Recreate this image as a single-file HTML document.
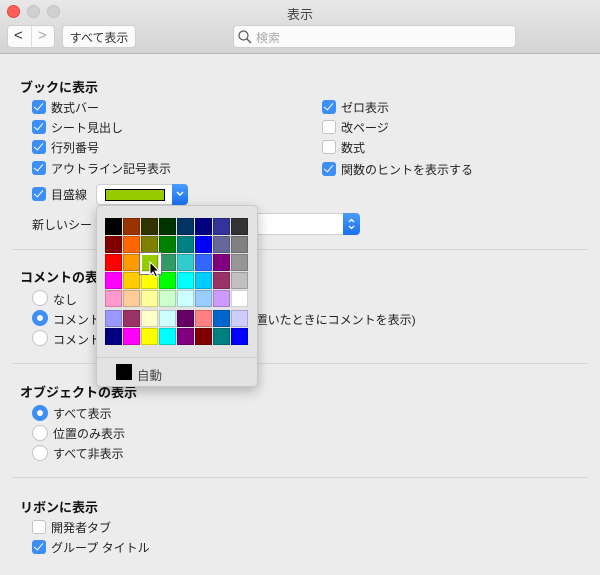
<!DOCTYPE html><html><head><meta charset="utf-8"><style>
*{margin:0;padding:0;box-sizing:border-box}
body{width:600px;height:575px;background:#ececec;font-family:"Liberation Sans","Noto Sans CJK JP",sans-serif;font-size:12px;color:#222;position:relative;overflow:hidden}
.a{position:absolute}
.tb{left:0;top:0;width:600px;height:54px;background:linear-gradient(#e8e8e8,#d3d3d3);border-bottom:1px solid #b8b8b8}
.dot{width:13px;height:13px;border-radius:50%;top:5px;background:#d0d0d0;border:1px solid #c2c2c2}
.btn{background:#fbfbfb;border:1px solid #cfcfcf;border-radius:4px;height:23px;top:25px}
.h{font-weight:bold;font-size:13px;left:20px;color:#111}
.cb{width:14px;height:14px;border-radius:3px;background:#3d8ef7;left:32px}
.cb::after{content:"";position:absolute;left:4px;top:1px;width:4px;height:8px;border:solid #fff;border-width:0 1.6px 1.6px 0;transform:rotate(40deg)}
.cb.off{background:#fff;border:1px solid #c3c3c3}
.cb.off::after{display:none}
.lb{left:51px}
.rd{width:16px;height:16px;border-radius:50%;background:#fff;border:1px solid #c3c3c3;left:32px}
.rd.on{background:#3d8ef7;border-color:#3d8ef7}
.rd.on::after{content:"";position:absolute;left:4px;top:4px;width:6px;height:6px;border-radius:50%;background:#fff}
.sep{left:12px;width:576px;height:1px;background:#d6d6d6}
.sw{width:17px;height:17px;border:1px solid rgba(0,0,0,.18)}
</style></head><body>
<div class="a tb"></div>
<div class="a dot" style="left:7px;background:#fc5f57;border-color:#e2463f"></div>
<div class="a dot" style="left:27px"></div>
<div class="a dot" style="left:47px"></div>
<div class="a" style="left:0;top:4px;width:600px;text-align:center;font-size:13px;color:#444">表示</div>
<div class="a btn" style="left:7px;width:48px"></div>
<div class="a" style="left:31px;top:26px;width:1px;height:21px;background:#ddd"></div>
<div class="a" style="left:14px;top:27px;font-size:15px;color:#333">&lt;</div>
<div class="a" style="left:38px;top:27px;font-size:15px;color:#aaa">&gt;</div>
<div class="a btn" style="left:62px;width:74px"></div>
<div class="a" style="left:62px;top:29px;width:74px;text-align:center;color:#333">すべて表示</div>
<div class="a btn" style="left:233px;width:283px"></div>
<svg class="a" style="left:237px;top:29px" width="16" height="16"><circle cx="6.5" cy="6.5" r="4.5" fill="none" stroke="#555" stroke-width="1.2"/><line x1="10" y1="10" x2="14" y2="14" stroke="#555" stroke-width="1.3"/></svg>
<div class="a" style="left:256px;top:29px;color:#aaa">検索</div>

<div class="a h" style="top:77px">ブックに表示</div>
<div class="a cb" style="top:100px"></div><div class="a lb" style="top:99px">数式バー</div>
<div class="a cb" style="top:120px"></div><div class="a lb" style="top:119px">シート見出し</div>
<div class="a cb" style="top:140px"></div><div class="a lb" style="top:139px">行列番号</div>
<div class="a cb" style="top:161px"></div><div class="a lb" style="top:160px">アウトライン記号表示</div>
<div class="a cb" style="top:187px"></div><div class="a lb" style="top:186px">目盛線</div>
<div class="a cb" style="left:322px;top:100px"></div><div class="a" style="left:341px;top:99px">ゼロ表示</div>
<div class="a cb off" style="left:322px;top:120px"></div><div class="a" style="left:341px;top:119px">改ページ</div>
<div class="a cb off" style="left:322px;top:140px"></div><div class="a" style="left:341px;top:139px">数式</div>
<div class="a cb" style="left:322px;top:162px"></div><div class="a" style="left:341px;top:161px">関数のヒントを表示する</div>
<div class="a" style="left:96px;top:184px;width:92px;height:21px;background:#fff;border:1px solid #cfcfcf;border-radius:4px"></div>
<div class="a" style="left:105px;top:189px;width:60px;height:12px;background:#99cc00;border:1px solid #000"></div>
<div class="a" style="left:172px;top:184px;width:16px;height:21px;background:linear-gradient(#4a9cfb,#1a6ff0);border-radius:0 4px 4px 0"></div>
<svg class="a" style="left:175px;top:190px" width="10" height="8"><path d="M2 2 L5 5 L8 2" fill="none" stroke="#fff" stroke-width="1.4"/></svg>
<div class="a" style="left:32px;top:216px">新しいシート</div>
<div class="a" style="left:250px;top:213px;width:110px;height:22px;background:#fff;border:1px solid #cfcfcf;border-radius:4px"></div>
<div class="a" style="left:343px;top:213px;width:17px;height:22px;background:linear-gradient(#4a9cfb,#1a6ff0);border-radius:0 4px 4px 0"></div>
<svg class="a" style="left:346px;top:215px" width="11" height="18"><path d="M3 7 L5.5 4.5 L8 7 M3 11 L5.5 13.5 L8 11" fill="none" stroke="#fff" stroke-width="1.3"/></svg>

<div class="a sep" style="top:249px"></div>
<div class="a h" style="top:267px">コメントの表示</div>
<div class="a rd" style="top:290px"></div><div class="a lb" style="left:53px;top:291px">なし</div>
<div class="a rd on" style="top:310px"></div><div class="a lb" style="left:53px;top:311px">コメント マーカーのみ (ポインターを置いたときにコメントを表示)</div>
<div class="a rd" style="top:330px"></div><div class="a lb" style="left:53px;top:331px">コメントとマーカー</div>

<div class="a sep" style="top:363px"></div>
<div class="a h" style="top:382px">オブジェクトの表示</div>
<div class="a rd on" style="top:405px"></div><div class="a lb" style="left:53px;top:405px">すべて表示</div>
<div class="a rd" style="top:425px"></div><div class="a lb" style="left:53px;top:425px">位置のみ表示</div>
<div class="a rd" style="top:445px"></div><div class="a lb" style="left:53px;top:445px">すべて非表示</div>

<div class="a sep" style="top:477px"></div>
<div class="a h" style="top:497px">リボンに表示</div>
<div class="a cb off" style="top:520px"></div><div class="a lb" style="top:519px">開発者タブ</div>
<div class="a cb" style="top:540px"></div><div class="a lb" style="top:539px">グループ タイトル</div>

<div class="a" style="left:96px;top:205px;width:162px;height:182px;background:#e3e3e3;border:1px solid #c8c8c8;border-radius:5px;box-shadow:0 4px 12px rgba(0,0,0,.25)"></div>
<div class="a" style="left:97px;top:357px;width:160px;height:1px;background:#cfcfcf"></div>
<div class="a" style="left:116px;top:364px;width:16px;height:16px;background:#000"></div>
<div class="a" style="left:137px;top:365px;color:#444;font-size:12.5px">自動</div>
<div id="g"></div>
<script>
var c=[["000000","993300","333300","003300","003366","000080","333399","333333"],["800000","FF6600","808000","008000","008080","0000FF","666699","808080"],["FF0000","FF9900","99CC00","339966","33CCCC","3366FF","800080","969696"],["FF00FF","FFCC00","FFFF00","00FF00","00FFFF","00CCFF","993366","C0C0C0"],["FF99CC","FFCC99","FFFF99","CCFFCC","CCFFFF","99CCFF","CC99FF","FFFFFF"],["9999FF","993366","FFFFCC","CCFFFF","660066","FF8080","0066CC","CCCCFF"],["000080","FF00FF","FFFF00","00FFFF","800080","800000","008080","0000FF"]];
var ys=[219,237,255,273,291,311,329],h="";
for(var r=0;r<7;r++)for(var k=0;k<8;k++){h+='<div class="a sw" style="left:'+(105+18*k)+'px;top:'+(ys[r]-1)+'px;background:#'+c[r][k]+'"></div>';}
h+='<div class="a" style="left:140px;top:253px;width:21px;height:21px;border:2px solid #fff;outline:1px solid #777"></div>';
document.getElementById("g").innerHTML=h;
</script>
<svg class="a" style="left:149px;top:261px" width="12" height="18"><path d="M1 1 L1 14 L4 11 L6.5 16 L8.5 15 L6 10 L10 10 Z" fill="#000" stroke="#fff" stroke-width="1"/></svg>
</body></html>
